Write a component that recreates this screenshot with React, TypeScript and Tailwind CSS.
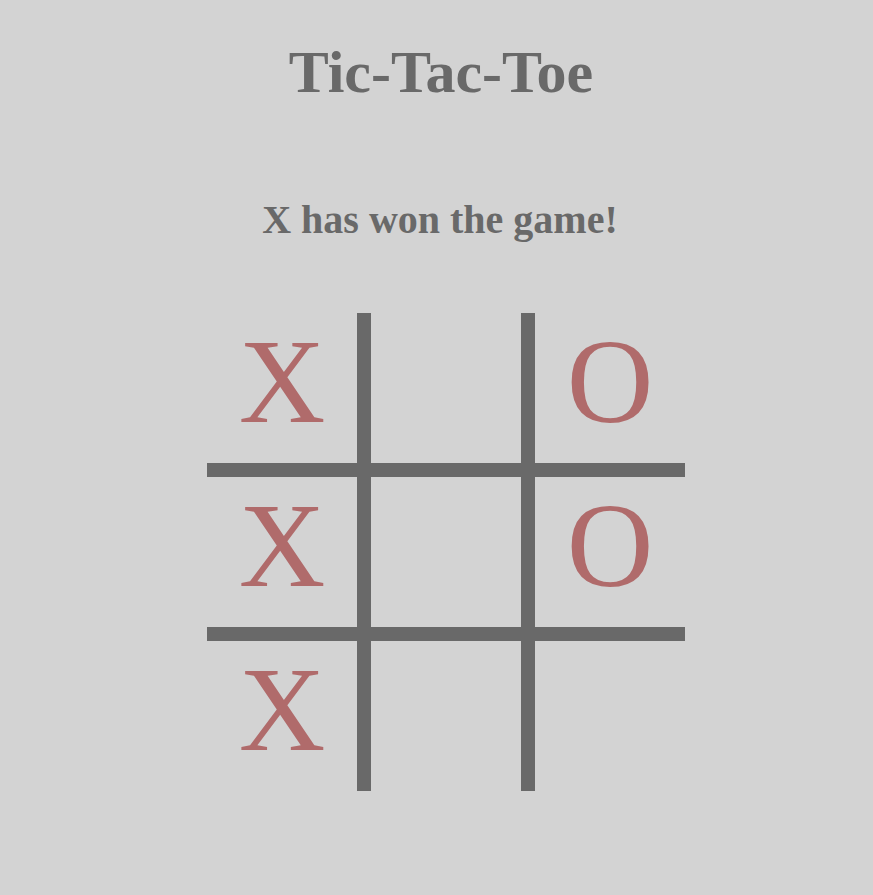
import React from "react";

const board: string[] = ["X", "", "O", "X", "", "O", "X", "", ""];

export default function App() {
  return (
    <div
      className="min-h-[895px] w-full bg-[#d3d3d3] flex flex-col items-center text-[#696969]"
      style={{ fontFamily: '"Liberation Serif", "Times New Roman", serif' }}
    >
      <h1 className="mt-[42px] ml-[9px] text-[60px] leading-[60px] font-bold">Tic-Tac-Toe</h1>
      <h2 className="mt-[98px] ml-[7px] text-[40px] leading-[40px] font-bold">X has won the game!</h2>
      <div className="mt-[73px] ml-[19px] grid grid-cols-[150px_150px_150px] gap-[14px] bg-[#696969]">
        {board.map((v, i) => (
          <div
            key={i}
            className="h-[150px] bg-[#d3d3d3] text-center text-[120px] leading-[138px] text-[#b06b6b]"
          >
            {v}
          </div>
        ))}
      </div>
    </div>
  );
}
